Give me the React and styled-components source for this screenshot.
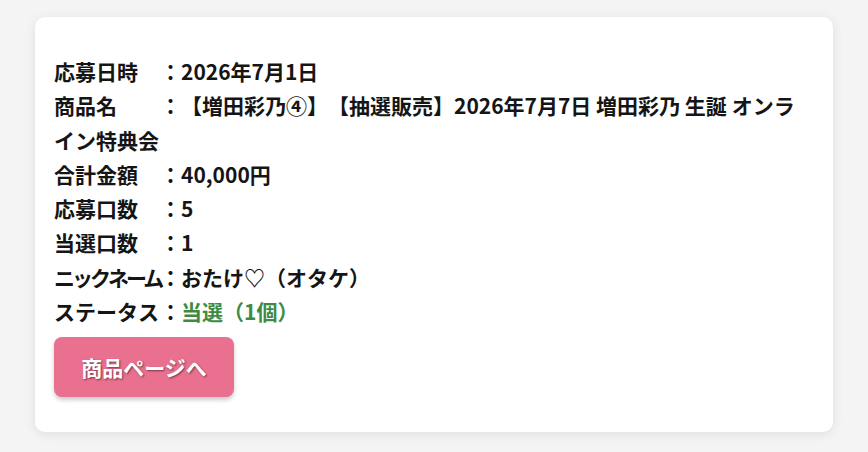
import React from 'react'
import styled, { createGlobalStyle } from 'styled-components'

const GlobalStyle = createGlobalStyle`
    html, body {
        margin: 0;
        padding: 0;
        background: #f4f4f4;
    }
    body {
        font-family: "Noto Sans CJK JP", "Noto Sans", sans-serif;
        color: #151515;
        text-spacing-trim: space-all;
    }
`;

const entry = {
    date: '2026年7月1日',
    item: '【増田彩乃④】【抽選販売】2026年7月7日 増田彩乃 生誕 オンライン特典会',
    total: '40,000円',
    applied: '5',
    won: '1',
    nickname: 'おたけ♡（オタケ）',
    status: '当選（1個）',
}

const Field = ({ label, children, highlight, squeeze }) => (
    <Row>
        <Label $squeeze={squeeze}>{label}</Label>
        <span>：</span>
        <Value $highlight={highlight}>{children}</Value>
    </Row>
)

export default function App() {
    return (
        <>
            <GlobalStyle />
            <Page>
                <Card>
                    <Field label="応募日時">{entry.date}</Field>
                    <Field label="商品名">{entry.item}</Field>
                    <Field label="合計金額">{entry.total}</Field>
                    <Field label="応募口数">{entry.applied}</Field>
                    <Field label="当選口数">{entry.won}</Field>
                    <Field label="ニックネーム" squeeze>{entry.nickname}</Field>
                    <Field label="ステータス" highlight>{entry.status}</Field>
                    <ItemButton type="button">商品ページへ</ItemButton>
                </Card>
            </Page>
        </>
    )
}

const Page = styled.div`
    box-sizing: border-box;
    width: 868px;
    height: 452px;
    padding: 17px 35px 0;
`;

const Card = styled.section`
    box-sizing: border-box;
    width: 798px;
    height: 415px;
    padding: 37px 19px 35px;
    background: #fff;
    border-radius: 10px;
    box-shadow: 0 2px 12px rgba(0, 0, 0, 0.09);
`;

const Row = styled.div`
    font-size: 21px;
    font-weight: 700;
    line-height: 34.3px;
`;

/* fixed-width label so every colon lines up; long katakana labels get tightened */
const Label = styled.span`
    display: inline-block;
    width: 106px;
    white-space: nowrap;
    letter-spacing: ${({ $squeeze }) => ($squeeze ? '-3px' : '0')};
`;

const Value = styled.span`
    color: ${({ $highlight }) => ($highlight ? '#3f8a42' : 'inherit')};
`;

const ItemButton = styled.button`
    display: block;
    margin-top: 9px;
    width: 180px;
    height: 60px;
    border: none;
    border-radius: 8px;
    background: #ea7090;
    color: #fff;
    font-family: inherit;
    font-size: 21px;
    font-weight: 700;
    text-shadow: 1px 1px 2px rgba(0, 0, 0, 0.5);
    box-shadow: 0 3px 4px rgba(0, 0, 0, 0.2);
    cursor: pointer;
`;
